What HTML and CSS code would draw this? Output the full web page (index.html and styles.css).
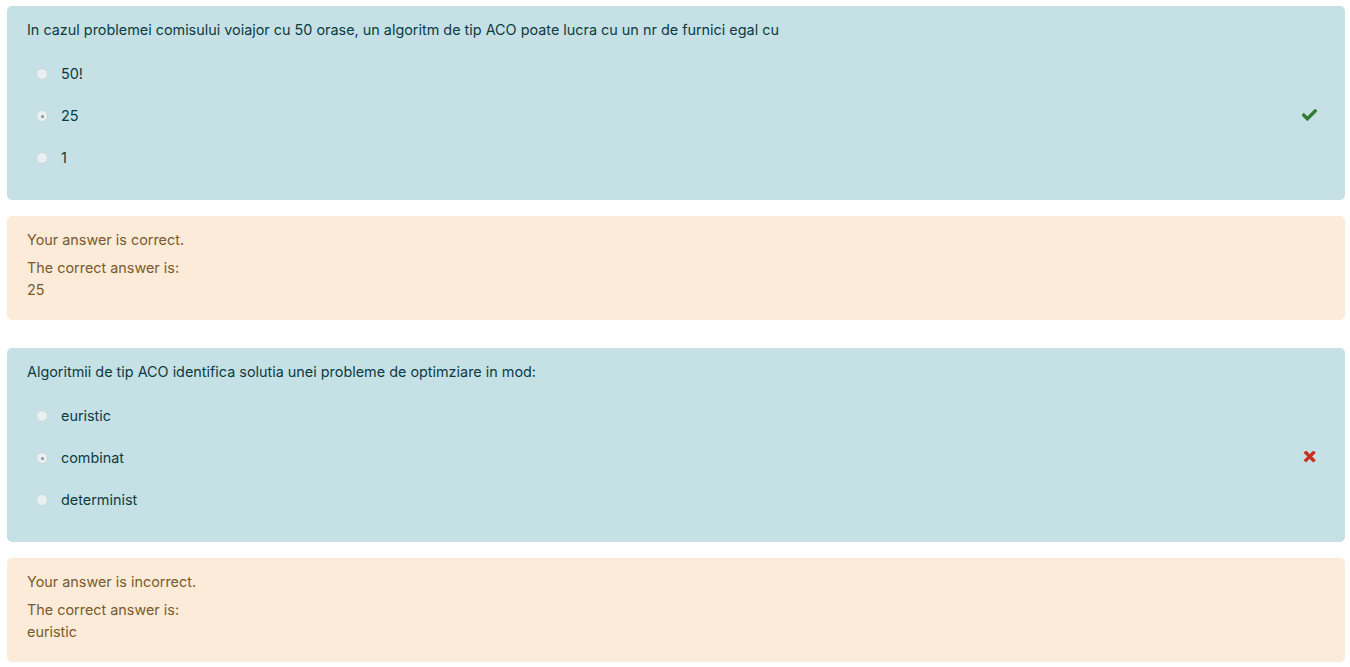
FILE: index.html
```html
<!DOCTYPE html>
<html>
<head>
<meta charset="utf-8">
<link rel="stylesheet" href="styles.css">
</head>
<body>
<div class="page">
  <div class="que">
    <div class="formulation">
      <div class="qtext">In cazul problemei comisului voiajor cu 50 orase, un algoritm de tip ACO poate lucra cu un nr de furnici egal cu</div>
      <div class="answer">
        <div class="opt"><span class="radio"></span><span class="label">50!</span></div>
        <div class="opt"><span class="radio checked"></span><span class="label">25</span>
          <svg class="mark" width="15" height="12" viewBox="0 0 15 12"><path d="M1.8 6.2 L5.4 9.8 L13.2 2" fill="none" stroke="#357a32" stroke-width="3.4" stroke-linecap="square"/></svg>
        </div>
        <div class="opt"><span class="radio"></span><span class="label">1</span></div>
      </div>
    </div>
    <div class="outcome">
      <div class="feedback">Your answer is correct.</div>
      <div class="rightanswer">The correct answer is:<br>25</div>
    </div>
  </div>
  <div class="que">
    <div class="formulation">
      <div class="qtext">Algoritmii de tip ACO identifica solutia unei probleme de optimziare in mod:</div>
      <div class="answer">
        <div class="opt"><span class="radio"></span><span class="label">euristic</span></div>
        <div class="opt"><span class="radio checked"></span><span class="label">combinat</span>
          <svg class="mark" width="15" height="12" viewBox="0 0 15 12"><path d="M4 1.8 L11.4 9.2 M11.4 1.8 L4 9.2" fill="none" stroke="#ca3120" stroke-width="3.4" stroke-linecap="square"/></svg>
        </div>
        <div class="opt"><span class="radio"></span><span class="label">determinist</span></div>
      </div>
    </div>
    <div class="outcome">
      <div class="feedback">Your answer is incorrect.</div>
      <div class="rightanswer">The correct answer is:<br>euristic</div>
    </div>
  </div>
</div>
</body>
</html>
```
FILE: styles.css
```css
html, body {
  margin: 0;
  padding: 0;
  background: #fff;
}
body {
  font-family: Inter, "Liberation Sans", sans-serif;
  font-size: 14.4px;
}
.page {
  padding: 6px 5px 0 7px;
}
.que {
  margin-bottom: 28px;
}
.formulation {
  background: #c5e1e6;
  color: #0e3b42;
  border-radius: 5px;
  padding: 13px 20px 21px;
}
.qtext {
  line-height: 22px;
  margin-bottom: 12px;
}
.opt {
  height: 42px;
  display: flex;
  align-items: center;
  position: relative;
}
.radio {
  width: 12px;
  height: 12px;
  border-radius: 50%;
  background: #e9f0f2;
  border: 1px solid #c9d6d9;
  box-sizing: border-box;
  margin-left: 9px;
  margin-right: 13px;
  position: relative;
}
.radio.checked::after {
  content: "";
  position: absolute;
  left: 3.5px;
  top: 3.5px;
  width: 3px;
  height: 3px;
  border-radius: 50%;
  background: #8a9598;
}
.label {
  line-height: 22px;
}
.mark {
  position: absolute;
  right: 8px;
  top: 14px;
}
.outcome {
  margin-top: 16px;
  background: #fbebd8;
  color: #7a5a2e;
  border-radius: 5px;
  padding: 13px 20px 19px;
  line-height: 22px;
}
.feedback {
  margin-bottom: 6px;
}
```
